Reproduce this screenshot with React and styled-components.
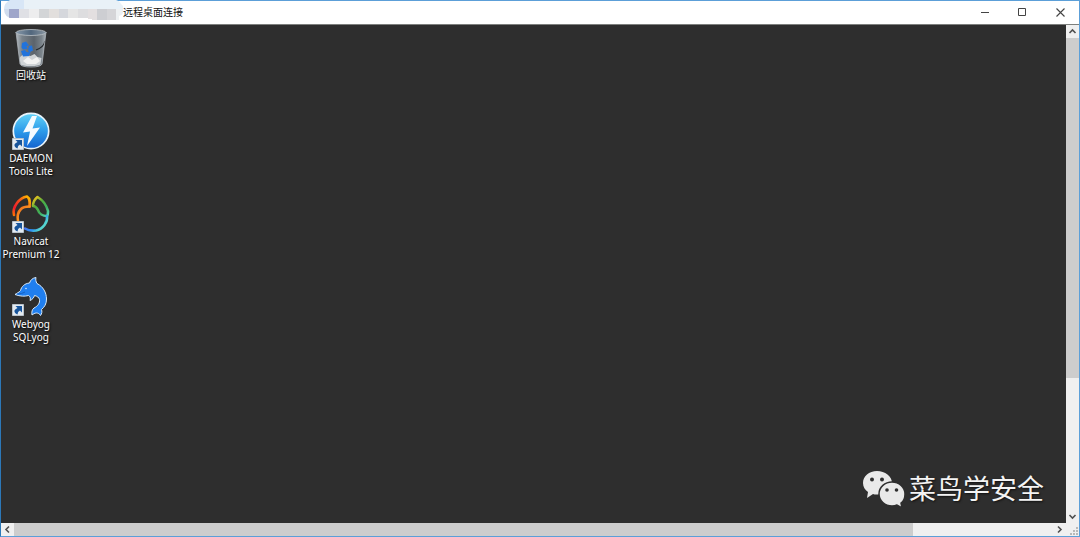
import React from "react";
import styled, { createGlobalStyle } from "styled-components";

const GlobalStyle = createGlobalStyle`
  *, *::before, *::after { box-sizing: border-box; }
  body { margin: 0; background: #2e2e2e; }
`;

const Window = styled.div`
  display: flex;
  flex-direction: column;
  min-height: 100vh;
  border: 1px solid #5c9fd8;
  border-left-color: #2c78b8;
  background: #ffffff;
  font-family: "Noto Sans", "Noto Sans CJK SC", sans-serif;
`;

const TitleBar = styled.header`
  display: flex;
  align-items: stretch;
  justify-content: space-between;
  height: 24px;
  border-bottom: 1px solid #7d7f7d;
  background: #ffffff;
`;

const Caption = styled.div`
  display: flex;
  align-items: flex-start;
  padding-left: 3px;
`;

const Redaction = styled.svg`
  display: block;
  width: 119px;
  height: 20px;
  margin-top: -1px;
`;

const Title = styled.h1`
  margin: 0;
  font-size: 10px;
  font-weight: 400;
  line-height: 22px;
  color: #111111;
`;

const Controls = styled.div`
  display: flex;
`;

const PlainButton = styled.button`
  display: flex;
  align-items: center;
  justify-content: center;
  padding: 0;
  border: 0;
  background: transparent;
  color: inherit;
`;

const ControlButton = styled(PlainButton)`
  width: 38px;
  color: #444444;
`;

const Body = styled.div`
  flex: 1;
  display: grid;
  grid-template-columns: 1fr 13px;
  grid-template-rows: 1fr 13px;
`;

const Desktop = styled.main`
  display: flex;
  flex-direction: column;
  justify-content: space-between;
  padding-left: 1px;
  background: #2e2e2e;
`;

const IconList = styled.ul`
  display: flex;
  flex-direction: column;
  width: 58px;
  margin: 0;
  padding: 2px 0 0;
  list-style: none;
`;

const Shortcut = styled.li`
  display: flex;
  flex-direction: column;
  align-items: center;
  height: 83px;
`;

const ShortcutLabel = styled.span`
  font-size: 10px;
  line-height: 13px;
  text-align: center;
  white-space: pre;
  color: #ffffff;
  text-shadow: 1px 1px 2px #000000;
`;

const Art = styled.svg`
  display: block;
  flex: none;
  width: 42px;
  height: 42px;
`;

const Watermark = styled.div`
  display: flex;
  align-items: center;
  align-self: flex-end;
  gap: 4px;
  margin: 0 22px 14px 0;
`;

const WatermarkText = styled.span`
  font-size: 27px;
  line-height: 40px;
  color: #f4f4f4;
  text-shadow: 1px 1px 2px #111111;
`;

const ScrollBar = styled.div`
  display: flex;
  flex-direction: ${(p) => (p.$vertical ? "column" : "row")};
  background: #f0f0f0;
`;

const ArrowButton = styled(PlainButton)`
  flex: none;
  width: 13px;
  height: 13px;
  color: #505050;
`;

const Track = styled.div`
  flex: 1;
  display: flex;
  flex-direction: inherit;
`;

const Thumb = styled.div`
  flex: 0 0 ${(p) => p.$size};
  background: #cdcdcd;
`;

const Grip = styled.svg`
  display: block;
  width: 13px;
  height: 13px;
  background: #f0f0f0;
`;

const arrows = {
  up: "M3.5 8 6.5 5l3 3",
  down: "M3.5 5 6.5 8l3-3",
  left: "M8 3.5 5 6.5l3 3",
  right: "M5 3.5 8 6.5l-3 3",
};

function Arrow({ direction, label }) {
  return (
    <ArrowButton type="button" aria-label={label}>
      <svg width="13" height="13" viewBox="0 0 13 13" fill="none" stroke="currentColor" strokeWidth="1.6">
        <path d={arrows[direction]} />
      </svg>
    </ArrowButton>
  );
}

function ShortcutArrow() {
  return (
    <g>
      <path d="M2.5 28.500h11v11h-11z" fill="#e3eaf1" stroke="#b9c2ca" />
      <path d="M5.500 30h6.500v6.500l-2-2q-2.500 1-2.500 4Q4 37 4.500 34.500 5 33 7.500 32z" fill="#17549b" />
    </g>
  );
}

function RecycleBin() {
  return (
    <Art viewBox="0 0 42 42" aria-hidden="true">
      <defs>
        <linearGradient id="bin" x1="0" x2="1">
          <stop offset="0" stopColor="#b4bbc0" />
          <stop offset=".2" stopColor="#79828a" />
          <stop offset=".6" stopColor="#5b636b" />
          <stop offset=".85" stopColor="#7b848b" />
          <stop offset="1" stopColor="#a9b0b6" />
        </linearGradient>
        <linearGradient id="rim" x1="0" x2="1">
          <stop offset="0" stopColor="#8597a8" />
          <stop offset=".5" stopColor="#52677d" />
          <stop offset="1" stopColor="#8895a0" />
        </linearGradient>
      </defs>
      <path d="M6 5 10 37q1 3 11 3t11-3l4-32z" fill="url(#bin)" />
      <path d="M9.500 31q3-5 7-3l4 1 4-2 3 3 4 1-1 6q-1 2-10 2t-10-2z" fill="#cfd3d6" />
      <path d="m13 34 5-4 4 3 5-3 3 4-4 3h-9z" fill="#f1f1f1" />
      <path
        d="m12 16 4-1.500 3 4-2.500.5 1 3-4.500.5-1.500-2zM19 19l3-.5 1 5-4 2-1-2.500zM11 24l4-1 1.500 2 4 .5-1.500 3.500-6 .5z"
        fill="#2173dc"
      />
      <path d="M35 14q-1 6-9 9" fill="none" stroke="#25292d" strokeWidth="1.300" />
      <path d="M6 5 10 37q1 3 11 3t11-3l4-32" fill="none" stroke="#aeb5bb" strokeWidth=".8" />
      <ellipse cx="21" cy="5.500" rx="15" ry="3" fill="url(#rim)" stroke="#bcc3c8" strokeWidth=".8" />
    </Art>
  );
}

function DaemonTools() {
  return (
    <Art viewBox="0 0 42 42" aria-hidden="true">
      <defs>
        <linearGradient id="disc" x1="0" y1="0" x2="0" y2="1">
          <stop offset="0" stopColor="#63d3f7" />
          <stop offset=".5" stopColor="#2c9bea" />
          <stop offset="1" stopColor="#1462cf" />
        </linearGradient>
      </defs>
      <circle cx="21" cy="21" r="17.700" fill="url(#disc)" stroke="#e9f4fb" strokeWidth="1.700" />
      <path d="M22 6 13 22.500l7-1L17 36l13-18.500-7.500 1L27 6z" fill="#f5fbff" />
      <ShortcutArrow />
    </Art>
  );
}

function Navicat() {
  return (
    <Art viewBox="0 0 42 42" aria-hidden="true">
      <defs>
        <linearGradient id="left" gradientUnits="userSpaceOnUse" x1="3" y1="22" x2="20" y2="6">
          <stop offset="0" stopColor="#ff7a00" />
          <stop offset=".25" stopColor="#ee1c2e" />
          <stop offset=".6" stopColor="#f6481a" />
          <stop offset="1" stopColor="#ffb400" />
        </linearGradient>
        <linearGradient id="right" gradientUnits="userSpaceOnUse" x1="23" y1="5" x2="38" y2="22">
          <stop offset="0" stopColor="#ffc61a" />
          <stop offset=".35" stopColor="#53ad3c" />
          <stop offset=".7" stopColor="#3fae5c" />
          <stop offset="1" stopColor="#54d3b0" />
        </linearGradient>
        <linearGradient id="base" gradientUnits="userSpaceOnUse" x1="10" y1="14" x2="32" y2="34">
          <stop offset="0" stopColor="#f0701c" />
          <stop offset=".3" stopColor="#ff9b22" />
          <stop offset=".5" stopColor="#5c6cf2" />
          <stop offset=".8" stopColor="#2c8ff6" />
          <stop offset="1" stopColor="#54d5cf" />
        </linearGradient>
      </defs>
      <g fill="none" strokeWidth="2.600" strokeLinejoin="round" strokeLinecap="round">
        <path d="M4 22c-1-4 0-8 3-12 3-4 7-6 10-6.500 3 2 3 5 2.500 10" stroke="url(#left)" />
        <path d="M8 28c-1-5 0-9 3-12 2-2 5-2.500 8.500-2.500" stroke="url(#base)" />
        <path d="M23 13c0-4 2-7 4.500-9 5 3 9 8 10.500 14 0 2 0 4-1 5-4 0-8-2-9-6-1-2-3-4-5-4z" stroke="url(#right)" />
        <path d="M37 23c1 6-4 13-11 14.500-5 .5-8 0-11-2" stroke="url(#base)" />
      </g>
      <ShortcutArrow />
    </Art>
  );
}

function Dolphin() {
  return (
    <Art viewBox="0 0 42 42" aria-hidden="true">
      <path
        d="M5 18.500c2-1.500 4-2 5.500-4 1-4 4-7 9-7.500 1-3 3-5 6.500-5.500-.5 2-.2 4 1 6 6 3 9.500 9 9.500 15.500 0 5-2 8-5 10.500.7 2 .5 4-1 6-1-2-3-2.500-4-2.500-2 0-3 1-4.500 2-.5-3 0-5.500 2-7 4-2 6-5 5.500-8.500-.5-2-2.500-3.500-5-4-.5 2-2 4-4.500 5 .7-2 .3-4-1.500-5-4 1-8 1-13.500-1z"
        fill="#207ff0"
        stroke="#d8eafa"
        strokeWidth="1"
        strokeLinejoin="round"
      />
      <path d="M7 18q5 0 8-2" fill="none" stroke="#145bb6" strokeWidth=".8" />
      <circle cx="16" cy="12.500" r=".8" fill="#d8eafa" />
      <ShortcutArrow />
    </Art>
  );
}

function WeChatMark() {
  return (
    <svg width="42" height="38" viewBox="0 0 42 38" aria-hidden="true">
      <path d="M14 1C6 1 0 6 0 13c0 4 2 7 5 9l-1 6 6-4q3 1 7 0c8-1 12-6 12-11C29 6 22 1 14 1z" fill="#e9e9e9" />
      <path
        d="M29 12c-7 0-13 5-13 12s6 12 13 12q3 0 5-1l5 3-1-5c3-2 4-5 4-9 0-7-6-12-13-12z"
        fill="#e9e9e9"
        stroke="#2e2e2e"
        strokeWidth="1.500"
      />
      <g fill="#2e2e2e">
        <circle cx="9" cy="9.500" r="2" />
        <circle cx="19" cy="9.500" r="2" />
        <circle cx="24" cy="20" r="1.800" />
        <circle cx="33.500" cy="20" r="1.800" />
      </g>
    </svg>
  );
}

const mosaic = [
  [0, 0, 20, 9, "#d8e6f6"],
  [20, 0, 100, 9, "#e9f1f7"],
  [0, 9, 5, 11, "#d0dced"],
  [5, 9, 10, 9, "#9fa6ca"],
  [15, 9, 10, 9, "#dfe0e5"],
  [25, 9, 10, 9, "#ededee"],
  [35, 9, 10, 9, "#d3d5d7"],
  [45, 9, 10, 9, "#e2dfdd"],
  [55, 9, 9, 9, "#d5d7dc"],
  [64, 9, 10, 9, "#e5e5e5"],
  [74, 9, 10, 9, "#dddddf"],
  [84, 9, 9, 11, "#e3dfe0"],
  [93, 9, 10, 11, "#cdced2"],
  [103, 9, 9, 11, "#d5d5d8"],
  [112, 9, 8, 11, "#edf0f2"],
];

const shortcuts = [
  { label: "回收站", Picture: RecycleBin },
  { label: "DAEMON\nTools Lite", Picture: DaemonTools },
  { label: "Navicat\nPremium 12", Picture: Navicat },
  { label: "Webyog\nSQLyog", Picture: Dolphin },
];

const gripDots = [[10, 4], [10, 7], [7, 7], [10, 10], [7, 10], [4, 10]];

export default function App() {
  return (
    <>
      <GlobalStyle />
      <Window>
        <TitleBar>
          <Caption>
            <Redaction viewBox="0 0 119 20" aria-hidden="true">
              <clipPath id="blob">
                <path d="M6 0h106q4 1 5 4 3 2 3 6-1 5-5 6v4H88v-1H10Q0 18 0 9 0 3 6 0z" />
              </clipPath>
              <g clipPath="url(#blob)">
                {mosaic.map(([x, y, w, h, fill]) => (
                  <rect key={`${x}-${y}`} x={x} y={y} width={w} height={h} fill={fill} />
                ))}
              </g>
            </Redaction>
            <Title>远程桌面连接</Title>
          </Caption>
          <Controls>
            <ControlButton type="button" aria-label="最小化">
              <svg width="9" height="9" viewBox="0 0 9 9" stroke="currentColor">
                <path d="M1 4.500h8" />
              </svg>
            </ControlButton>
            <ControlButton type="button" aria-label="最大化">
              <svg width="9" height="9" viewBox="0 0 9 9" fill="none" stroke="currentColor">
                <path d="M.5.5h7v7h-7z" />
              </svg>
            </ControlButton>
            <ControlButton type="button" aria-label="关闭">
              <svg width="9" height="9" viewBox="0 0 9 9" stroke="currentColor" strokeWidth="1.100">
                <path d="m.5.5 8 8m0-8-8 8" />
              </svg>
            </ControlButton>
          </Controls>
        </TitleBar>
        <Body>
          <Desktop>
            <IconList>
              {shortcuts.map(({ label, Picture }) => (
                <Shortcut key={label}>
                  <Picture />
                  <ShortcutLabel>{label}</ShortcutLabel>
                </Shortcut>
              ))}
            </IconList>
            <Watermark>
              <WeChatMark />
              <WatermarkText>菜鸟学安全</WatermarkText>
            </Watermark>
          </Desktop>
          <ScrollBar $vertical>
            <Arrow direction="up" label="向上滚动" />
            <Track>
              <Thumb $size="72%" />
            </Track>
            <Arrow direction="down" label="向下滚动" />
          </ScrollBar>
          <ScrollBar>
            <Arrow direction="left" label="向左滚动" />
            <Track>
              <Thumb $size="86.5%" />
            </Track>
            <Arrow direction="right" label="向右滚动" />
          </ScrollBar>
          <Grip viewBox="0 0 13 13" aria-hidden="true">
            {gripDots.map(([x, y]) => (
              <rect key={`${x}-${y}`} x={x} y={y} width="2" height="2" fill="#b9b9b9" />
            ))}
          </Grip>
        </Body>
      </Window>
    </>
  );
}
